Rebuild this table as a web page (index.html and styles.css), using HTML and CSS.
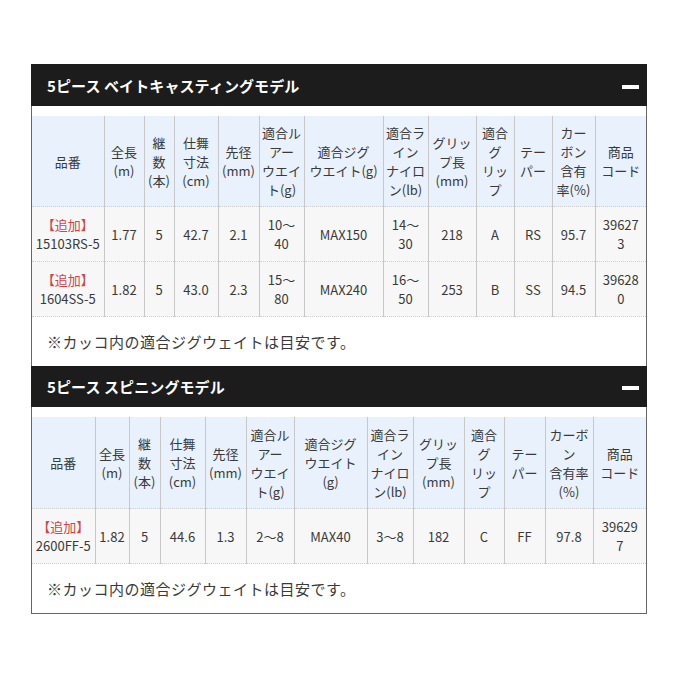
FILE: index.html
```html
<!DOCTYPE html>
<html lang="ja">
<head>
<meta charset="utf-8">
<link rel="stylesheet" href="styles.css">
</head>
<body>
<div class="page">
  <section class="box">
    <div class="bar">
      <span class="title">5ピース ベイトキャスティングモデル</span>
      <span class="minus"></span>
    </div>
    <div class="inner">
      <table class="spec">
        <colgroup>
          <col class="a1"><col class="a2"><col class="a3"><col class="a4"><col class="a5"><col class="a6"><col class="a7"><col class="a8"><col class="a9"><col class="a10"><col class="a11"><col class="a12"><col class="a13">
        </colgroup>
        <tr class="head">
          <th>品番</th>
          <th>全長<br>(m)</th>
          <th>継<br>数<br>(本)</th>
          <th>仕舞<br>寸法<br>(cm)</th>
          <th>先径<br>(mm)</th>
          <th>適合ル<br>アー<br>ウエイ<br>ト(g)</th>
          <th>適合ジグ<br>ウエイト(g)</th>
          <th>適合ラ<br>イン<br>ナイロ<br>ン(lb)</th>
          <th>グリッ<br>プ長<br>(mm)</th>
          <th>適合<br>グ<br>リッ<br>プ</th>
          <th>テー<br>パー</th>
          <th>カー<br>ボン<br>含有<br>率(%)</th>
          <th>商品<br>コード</th>
        </tr>
        <tr class="row">
          <td><span class="new">【追加】</span><br>15103RS-5</td>
          <td>1.77</td>
          <td>5</td>
          <td>42.7</td>
          <td>2.1</td>
          <td>10〜<br>40</td>
          <td>MAX150</td>
          <td>14〜<br>30</td>
          <td>218</td>
          <td>A</td>
          <td>RS</td>
          <td>95.7</td>
          <td>39627<br>3</td>
        </tr>
        <tr class="row">
          <td><span class="new">【追加】</span><br>1604SS-5</td>
          <td>1.82</td>
          <td>5</td>
          <td>43.0</td>
          <td>2.3</td>
          <td>15〜<br>80</td>
          <td>MAX240</td>
          <td>16〜<br>50</td>
          <td>253</td>
          <td>B</td>
          <td>SS</td>
          <td>94.5</td>
          <td>39628<br>0</td>
        </tr>
      </table>
      <p class="note">※カッコ内の適合ジグウェイトは目安です。</p>
    </div>
  </section>

  <section class="box last">
    <div class="bar">
      <span class="title">5ピース スピニングモデル</span>
      <span class="minus"></span>
    </div>
    <div class="inner">
      <table class="spec">
        <colgroup>
          <col class="b1"><col class="b2"><col class="b3"><col class="b4"><col class="b5"><col class="b6"><col class="b7"><col class="b8"><col class="b9"><col class="b10"><col class="b11"><col class="b12"><col class="b13">
        </colgroup>
        <tr class="head tall">
          <th>品番</th>
          <th>全長<br>(m)</th>
          <th>継<br>数<br>(本)</th>
          <th>仕舞<br>寸法<br>(cm)</th>
          <th>先径<br>(mm)</th>
          <th>適合ル<br>アー<br>ウエイ<br>ト(g)</th>
          <th>適合ジグ<br>ウエイト<br>(g)</th>
          <th>適合ラ<br>イン<br>ナイロ<br>ン(lb)</th>
          <th>グリッ<br>プ長<br>(mm)</th>
          <th>適合<br>グ<br>リッ<br>プ</th>
          <th>テー<br>パー</th>
          <th>カーボ<br>ン<br>含有率<br>(%)</th>
          <th>商品<br>コード</th>
        </tr>
        <tr class="row">
          <td><span class="new">【追加】</span><br>2600FF-5</td>
          <td>1.82</td>
          <td>5</td>
          <td>44.6</td>
          <td>1.3</td>
          <td>2〜8</td>
          <td>MAX40</td>
          <td>3〜8</td>
          <td>182</td>
          <td>C</td>
          <td>FF</td>
          <td>97.8</td>
          <td>39629<br>7</td>
        </tr>
      </table>
      <p class="note">※カッコ内の適合ジグウェイトは目安です。</p>
    </div>
  </section>
</div>
</body>
</html>
```
FILE: styles.css
```css
html, body {
  margin: 0;
  padding: 0;
  background: #fff;
}
body {
  font-family: "Noto Sans CJK JP", "Noto Sans", sans-serif;
  color: #3a3a3a;
}
.page {
  padding-top: 64px;
  margin-left: 31px;
  width: 616px;
}
.box {
  border-left: 1px solid #666;
  border-right: 1px solid #666;
}
.box.last {
  border-bottom: 1px solid #666;
}
.bar {
  height: 42px;
  background: #1c1c1c;
  display: flex;
  align-items: center;
  justify-content: space-between;
  padding: 0 8px 0 16px;
  margin: 0 -1px;
}
.box.last .bar {
  height: 41px;
}
.title {
  color: #fff;
  font-weight: bold;
  font-size: 15px;
  letter-spacing: 0.1px;
}
.minus {
  width: 17px;
  height: 4px;
  background: #fff;
  margin-top: 3px;
}
.inner {
  padding-top: 10px;
}
.spec {
  width: 614px;
  table-layout: fixed;
  border-collapse: collapse;
  font-size: 13px;
  line-height: 19px;
}
.spec th, .spec td {
  text-align: center;
  vertical-align: middle;
  padding: 0;
  border-left: 1px solid #c8c8c8;
  font-weight: normal;
}
.spec th:first-child, .spec td:first-child {
  border-left: none;
}
.head th {
  background: #e8f1fc;
  height: 90px;
  border-bottom: 1px dotted #cfcfcf;
}
.head.tall th {
  height: 91px;
}
.row td {
  background: #f7f7f7;
  height: 54px;
  border-bottom: 1px dotted #cfcfcf;
}
.new {
  color: #d04545;
}
.note {
  margin: 0;
  height: 49px;
  display: flex;
  align-items: center;
  padding-left: 15px;
  font-size: 15px;
  letter-spacing: 0.5px;
}
.a1 { width: 72px; } .a2 { width: 40px; } .a3 { width: 30px; } .a4 { width: 44px; }
.a5 { width: 41px; } .a6 { width: 45px; } .a7 { width: 79px; } .a8 { width: 45px; }
.a9 { width: 48px; } .a10 { width: 38px; } .a11 { width: 38px; } .a12 { width: 43px; }
.a13 { width: 51px; }
.b1 { width: 63px; } .b2 { width: 34px; } .b3 { width: 31px; } .b4 { width: 45px; }
.b5 { width: 41px; } .b6 { width: 48px; } .b7 { width: 73px; } .b8 { width: 46px; }
.b9 { width: 51px; } .b10 { width: 40px; } .b11 { width: 41px; } .b12 { width: 48px; }
.b13 { width: 53px; }
```
